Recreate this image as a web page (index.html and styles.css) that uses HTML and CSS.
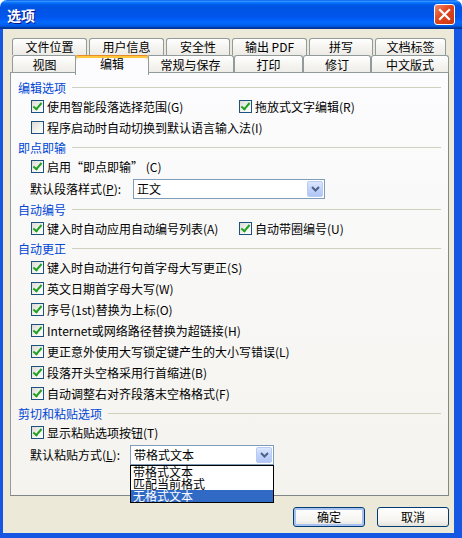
FILE: index.html
```html
<!DOCTYPE html>
<html lang="zh-CN">
<head>
    <meta charset="UTF-8">
    <title>选项</title>
    <link rel="stylesheet" href="styles.css">
</head>
<body>
    <div class="window">
        <div class="titlebar">
            <span class="title">选项</span>
            <button class="close-btn" title="关闭">
                <svg width="13" height="13" viewBox="0 0 13 13">
                    <path d="M2 2 L11 11 M11 2 L2 11" stroke="#fff" stroke-width="2.2" stroke-linecap="square"/>
                </svg>
            </button>
        </div>

        <div class="client">
            <!-- 两排标签页 -->
            <div class="tabs">
                <div class="tab-row tab-row-back">
                    <div class="tab">文件位置</div>
                    <div class="tab">用户信息</div>
                    <div class="tab">安全性</div>
                    <div class="tab">输出 PDF</div>
                    <div class="tab">拼写</div>
                    <div class="tab">文档标签</div>
                </div>
                <div class="tab-row tab-row-front">
                    <div class="tab">视图</div>
                    <div class="tab active">编辑</div>
                    <div class="tab">常规与保存</div>
                    <div class="tab">打印</div>
                    <div class="tab">修订</div>
                    <div class="tab">中文版式</div>
                </div>
            </div>

            <div class="panel">
                <!-- 编辑选项 -->
                <div class="group-title">编辑选项</div>
                <div class="check-row two-col">
                    <label class="check"><span class="box checked"></span>使用智能段落选择范围(G)</label>
                    <label class="check"><span class="box checked"></span>拖放式文字编辑(R)</label>
                </div>
                <div class="check-row">
                    <label class="check"><span class="box"></span>程序启动时自动切换到默认语言输入法(I)</label>
                </div>

                <!-- 即点即输 -->
                <div class="group-title">即点即输</div>
                <div class="check-row">
                    <label class="check"><span class="box checked"></span>启用“即点即输” (C)</label>
                </div>
                <div class="field-row">
                    <span class="field-label">默认段落样式(<u>P</u>):</span>
                    <div class="select select-style">
                        <span class="select-text">正文</span>
                        <span class="select-arrow">
                            <svg width="9" height="6" viewBox="0 0 9 6"><path d="M1 1 L4.5 4.5 L8 1" stroke="#4d6185" stroke-width="2" fill="none"/></svg>
                        </span>
                    </div>
                </div>

                <!-- 自动编号 -->
                <div class="group-title">自动编号</div>
                <div class="check-row two-col">
                    <label class="check"><span class="box checked"></span>键入时自动应用自动编号列表(A)</label>
                    <label class="check"><span class="box checked"></span>自动带圈编号(U)</label>
                </div>

                <!-- 自动更正 -->
                <div class="group-title">自动更正</div>
                <div class="check-row">
                    <label class="check"><span class="box checked"></span>键入时自动进行句首字母大写更正(S)</label>
                </div>
                <div class="check-row">
                    <label class="check"><span class="box checked"></span>英文日期首字母大写(W)</label>
                </div>
                <div class="check-row">
                    <label class="check"><span class="box checked"></span>序号(1st)替换为上标(O)</label>
                </div>
                <div class="check-row">
                    <label class="check"><span class="box checked"></span>Internet或网络路径替换为超链接(H)</label>
                </div>
                <div class="check-row">
                    <label class="check"><span class="box checked"></span>更正意外使用大写锁定键产生的大小写错误(L)</label>
                </div>
                <div class="check-row">
                    <label class="check"><span class="box checked"></span>段落开头空格采用行首缩进(B)</label>
                </div>
                <div class="check-row">
                    <label class="check"><span class="box checked"></span>自动调整右对齐段落末空格格式(F)</label>
                </div>

                <!-- 剪切和粘贴选项 -->
                <div class="group-title">剪切和粘贴选项</div>
                <div class="check-row">
                    <label class="check"><span class="box checked"></span>显示粘贴选项按钮(T)</label>
                </div>
                <div class="field-row">
                    <span class="field-label">默认粘贴方式(<u>L</u>):</span>
                    <div class="select select-paste">
                        <span class="select-text">带格式文本</span>
                        <span class="select-arrow">
                            <svg width="9" height="6" viewBox="0 0 9 6"><path d="M1 1 L4.5 4.5 L8 1" stroke="#4d6185" stroke-width="2" fill="none"/></svg>
                        </span>
                        <ul class="dropdown">
                            <li>带格式文本</li>
                            <li>匹配当前格式</li>
                            <li class="selected">无格式文本</li>
                        </ul>
                    </div>
                </div>
            </div>

            <div class="footer">
                <button class="btn btn-default">确定</button>
                <button class="btn">取消</button>
            </div>
        </div>
    </div>
</body>
</html>
```

FILE: styles.css
```css
* {
    box-sizing: border-box;
}

body {
    width: 462px;
    height: 538px;
    margin: 0;
    font-family: "Noto Sans CJK SC", "Noto Sans", sans-serif;
    font-size: 12px;
    color: #000;
    background: #fff;
}

.window {
    width: 462px;
    height: 538px;
    display: flex;
    flex-direction: column;
}

/* 标题栏 */
.titlebar {
    flex: none;
    height: 29px;
    display: flex;
    align-items: center;
    justify-content: space-between;
    padding: 0 7px;
    border-radius: 7px 7px 0 0;
    background: linear-gradient(to bottom, #0058ee 0%, #3593ff 4%, #288eff 6%, #127dff 8%, #036ffc 10%, #0262ee 14%, #0057e5 20%, #0054e3 24%, #0055eb 56%, #005bf5 66%, #026afe 76%, #0062ef 86%, #0052d6 92%, #0040ab 94%, #003092 100%);
}

.title {
    color: #fff;
    font-size: 14px;
    font-weight: bold;
    text-shadow: 1px 1px #0f1089;
}

.close-btn {
    width: 21px;
    height: 21px;
    padding: 0;
    border: 1px solid #fff;
    border-radius: 3px;
    background: linear-gradient(135deg, #f08a6c 0%, #e0451d 45%, #c83512 100%);
    display: flex;
    align-items: center;
    justify-content: center;
}

/* 窗口主体 */
.client {
    flex: 1;
    display: flex;
    flex-direction: column;
    background: #ece9d8;
    border: 0 solid #1556e2;
    border-width: 0 8px 5px 3px;
    padding: 9px 5px 6px 7px;
}

/* 标签页 */
.tab-row {
    display: grid;
    height: 17px;
    margin-left: 2px;
}

.tab-row-back {
    grid-template-columns: 75px 75px 64px 75px 64px 71px;
    column-gap: 2px;
}

.tab-row-front {
    grid-template-columns: 65px 70px 87px 69px 68px 78px;
}

.tab {
    display: flex;
    align-items: center;
    justify-content: center;
    line-height: 1;
    border: 1px solid #919b9c;
    border-bottom: none;
    border-radius: 3px 3px 0 0;
    background: linear-gradient(to bottom, #fff 0%, #f3f2ee 60%, #ecebe6 100%);
    white-space: nowrap;
}

.tab.active {
    align-self: end;
    height: 20px;
    margin: 0 -2px -1px;
    z-index: 1;
    padding-bottom: 3px;
    background: #fcfcfe;
    border-top: 1px solid #e68b2c;
    box-shadow: inset 0 2px #ffc83c;
}

.panel {
    flex: 1;
    border: 1px solid #919b9c;
    border-right-color: #7f8788;
    border-bottom-color: #7f8788;
    background: linear-gradient(to bottom, #fcfcfe 0%, #f4f3ee 100%);
    padding: 5px 7px 0 7px;
}

/* 分组标题 */
.group-title {
    height: 18px;
    display: flex;
    align-items: center;
    color: #0046d5;
    white-space: nowrap;
}

.group-title::after {
    content: "";
    flex: 1;
    height: 1px;
    margin-left: 6px;
    background: #d0d0bf;
}

/* 复选框 */
.check-row {
    height: 21px;
    display: flex;
    align-items: center;
    padding-left: 13px;
}

.check-row.two-col {
    display: grid;
    grid-template-columns: 208px auto;
    align-items: center;
}

.check {
    display: flex;
    align-items: center;
    gap: 3px;
    white-space: nowrap;
}

.box {
    flex: none;
    position: relative;
    width: 13px;
    height: 13px;
    border: 1px solid #1c5180;
    background: linear-gradient(135deg, #dcdcd7 0%, #f4f4f0 60%, #fff 100%);
}

.box.checked::after {
    content: "";
    position: absolute;
    left: 3px;
    top: 0;
    width: 3px;
    height: 7px;
    border: solid #21a121;
    border-width: 0 2px 2px 0;
    transform: rotate(40deg);
}

/* 下拉框 */
.field-row {
    height: 23px;
    display: flex;
    align-items: center;
    padding-left: 12px;
}

.field-label {
    width: 100px;
    white-space: nowrap;
}

.select {
    position: relative;
    height: 20px;
    display: flex;
    align-items: center;
    padding: 0 1px 0 3px;
    border: 1px solid #7f9db9;
    background: #fff;
}

.select-style {
    width: 192px;
    margin-left: 3px;
}

.select-paste {
    width: 144px;
}

.select-text {
    flex: 1;
    line-height: 1;
}

.select-arrow {
    width: 16px;
    height: 16px;
    display: flex;
    align-items: center;
    justify-content: center;
    border: 1px solid #b8cbf5;
    border-radius: 2px;
    background: linear-gradient(to bottom, #dde7fe 0%, #c1d3fb 50%, #b2c6f6 100%);
}

.dropdown {
    position: absolute;
    left: -1px;
    top: 19px;
    width: 144px;
    margin: 0;
    padding: 0;
    list-style: none;
    border: 1px solid #000;
    background: #fff;
    z-index: 2;
}

.dropdown li {
    height: 12px;
    line-height: 12px;
    padding-left: 2px;
    white-space: nowrap;
}

.dropdown li.selected {
    background: #316ac5;
    color: #fff;
}

/* 底部按钮 */
.footer {
    flex: none;
    display: flex;
    justify-content: flex-end;
    gap: 12px;
    height: 20px;
    margin-top: 11px;
}

.btn {
    width: 72px;
    height: 20px;
    padding: 0;
    font: inherit;
    line-height: 1;
    border: 1px solid #003c74;
    border-radius: 3px;
    background: linear-gradient(to bottom, #fff 0%, #f5f4f0 70%, #e3e2da 100%);
}

.btn-default {
    box-shadow: inset 0 0 0 2px #a9c1f0;
}
```
